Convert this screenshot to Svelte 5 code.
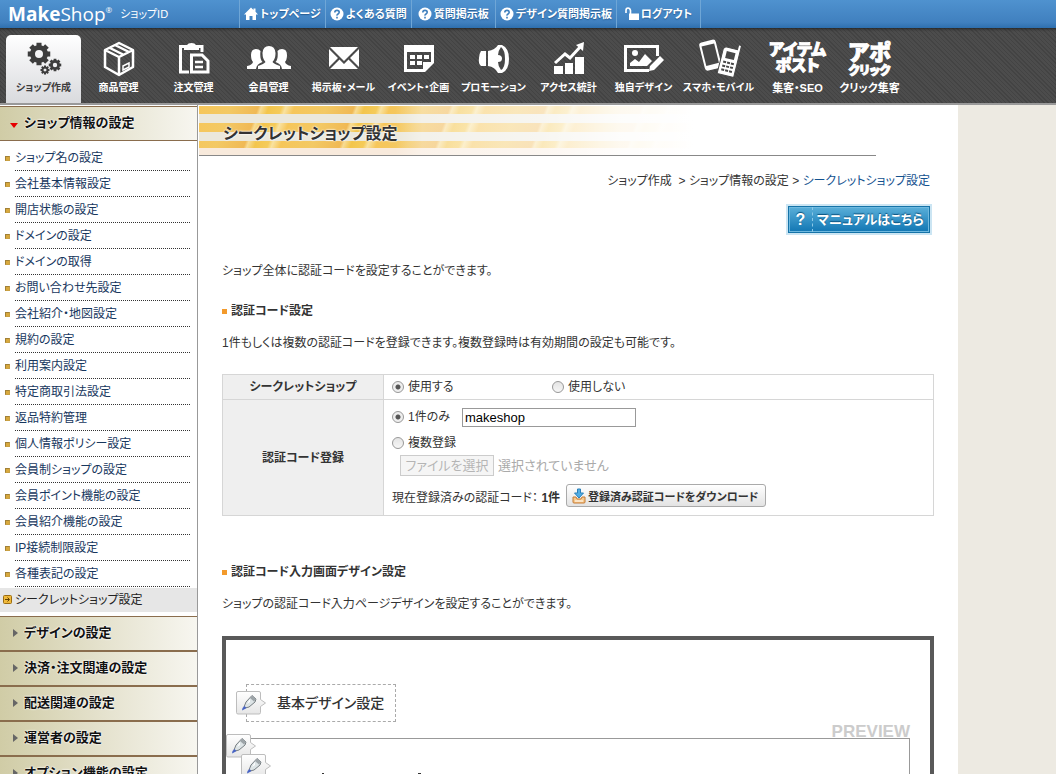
<script lang="ts">
	type IconName = 'gears' | 'box' | 'clipboard' | 'people' | 'mail' | 'calendar' | 'speaker' | 'chart' | 'design' | 'mobile';

	const topLinks = [
		{ label: 'トップページ', icon: 'home' },
		{ label: 'よくある質問', icon: 'help' },
		{ label: '質問掲示板', icon: 'help' },
		{ label: 'デザイン質問掲示板', icon: 'help' },
		{ label: 'ログアウト', icon: 'lock' }
	];

	const menus: { label: string; icon: IconName }[] = [
		{ label: 'ショップ作成', icon: 'gears' },
		{ label: '商品管理', icon: 'box' },
		{ label: '注文管理', icon: 'clipboard' },
		{ label: '会員管理', icon: 'people' },
		{ label: '掲示板・メール', icon: 'mail' },
		{ label: 'イベント・企画', icon: 'calendar' },
		{ label: 'プロモーション', icon: 'speaker' },
		{ label: 'アクセス統計', icon: 'chart' },
		{ label: '独自デザイン', icon: 'design' },
		{ label: 'スマホ・モバイル', icon: 'mobile' }
	];

	const sideItems = [
		'ショップ名の設定',
		'会社基本情報設定',
		'開店状態の設定',
		'ドメインの設定',
		'ドメインの取得',
		'お問い合わせ先設定',
		'会社紹介・地図設定',
		'規約の設定',
		'利用案内設定',
		'特定商取引法設定',
		'返品特約管理',
		'個人情報ポリシー設定',
		'会員制ショップの設定',
		'会員ポイント機能の設定',
		'会員紹介機能の設定',
		'IP接続制限設定',
		'各種表記の設定'
	];

	const sideGroups = ['デザインの設定', '決済・注文関連の設定', '配送関連の設定', '運営者の設定', 'オプション機能の設定'];

	const teeth = [0, 45, 90, 135, 180, 225, 270, 315];

	let activeMenu = $state(0);
	let enabled = $state('on');
	let codeType = $state('single');
	let code = $state('makeshop');
</script>

{#snippet gear(x: number, y: number, r: number, hole: number)}
	<g transform="translate({x} {y})">
		{#each teeth as t}
			<rect x={-r * 0.28} y={-r * 1.25} width={r * 0.56} height={r / 2} transform="rotate({t})" />
		{/each}
		<circle r={(r + hole) / 2} fill="none" stroke="currentColor" stroke-width={r - hole} />
	</g>
{/snippet}

{#snippet penTag()}
	<svg class="pen-tag" width="31" height="24" viewBox="0 0 31 24">
		<defs>
			<linearGradient id="tagBg" x2="0" y2="1">
				<stop offset="0" stop-color="#fff" />
				<stop offset="1" stop-color="#e6e6e6" />
			</linearGradient>
		</defs>
		<path d="M2 .5h21q1.500 0 1.500 1.500v6.500l5 3.500-5 3.500v6q0 1.500-1.500 1.500h-21q-1.500 0-1.500-1.500v-19.500q0-1.500 1.500-1.500z" fill="url(#tagBg)" stroke="#bdbdbd" />
		<path d="M16 4.500l4 3.500-1 3-6 5-4 1-1-1 2-5z" fill="#dde4e6" stroke="#777e82" />
		<path d="M16 4.500l4 3.500-2 2.500-4-3.500z" fill="#9da4a8" />
		<path d="M14 8l-3 5 3-2z" fill="#fff" />
		<path d="M8.500 15l2 2-2.500 1.500-2 1 .5-2.500z" fill="#4763c4" />
	</svg>
{/snippet}

<div class="page">
	<header>
		<div class="topbar">
			<a class="logo" href="#top"><b>Make</b>Shop<sup>®</sup></a>
			<span class="shop-id">ショップID</span>
			<nav class="toplinks">
				{#each topLinks as link}
					<a href="#{link.icon}">
						<svg width="14" height="14" viewBox="0 0 14 14" fill="currentColor">
							{#if link.icon === 'home'}
								<path d="M7 .5l2.500 2.400V1.500h2v3.300L14 7.500h-2V13H8.500V9h-3v4H2V7.500H0z" />
							{:else if link.icon === 'help'}
								<circle cx="7" cy="7" r="6.500" />
								<path d="M4.800 5.500Q4.800 3.400 7 3.400T9.200 5.300Q9.200 6.300 8 7T7 8.700M7 9.800v1.600" fill="none" stroke="#3f7fbd" stroke-width="1.600" />
							{:else}
								<path d="M5 6.500h9V13H4V6.500z" />
								<path d="M1 6V3.500Q1 1 3 1t2.500 2.500V7" fill="none" stroke="currentColor" stroke-width="1.600" />
							{/if}
						</svg>
						{link.label}
					</a>
				{/each}
			</nav>
		</div>

		<nav class="menubar">
			{#each menus as menu, i}
				<a href="#{menu.icon}" class="menu" class:active={activeMenu === i} onclick={() => (activeMenu = i)}>
					<svg width="44" height="40" viewBox="0 0 44 40" fill="currentColor">
						{#if menu.icon === 'gears'}
							{@render gear(17, 15, 9, 4)}
							{@render gear(33, 26, 5, 2.2)}
							{@render gear(23, 31, 3.6, 1.5)}
						{:else if menu.icon === 'box'}
							<path d="M22 4l14 7v17l-14 8-14-8V11zM8 11l14 7 14-7M22 18v18M12 8.500l14 7M18 6l14 7" fill="none" stroke="currentColor" stroke-width="2.500" stroke-linejoin="round" />
							<path d="M26 27l6-3v4l-6 3z" fill="none" stroke="currentColor" stroke-width="1.500" />
						{:else if menu.icon === 'clipboard'}
							<path d="M17 33H8.500V7.500H30V13" fill="none" stroke="currentColor" stroke-width="3" />
							<path d="M12 6h3q1-2 4.500-2T24 6h3v5H12z" />
							<path d="M19.500 16H30l6 6v11H19.500z" fill="none" stroke="currentColor" stroke-width="3" />
							<path d="M23 23h8M23 28h8" stroke="currentColor" stroke-width="2.500" />
						{:else if menu.icon === 'people'}
							<path d="M11 30v-3q6-2 7.500-4-3-3-3-9Q16 7 22 7t6.500 7q0 6-3 9 1.500 2 7.500 4v3z" />
							<path d="M0 30v-3q5-1 6-4-2-2-2-7 0-6 5-6 3 0 4.500 2-1 8 2 11-6 2-6.500 7zM44 30v-3q-5-1-6-4 2-2 2-7 0-6-5-6-3 0-4.500 2 1 8-2 11 6 2 6.500 7z" />
						{:else if menu.icon === 'mail'}
							<path d="M8 8h28L22 22zM7 10l9 9-9 9zM37 10v18l-9-9zM17.500 20.500L22 25l4.500-4.500L36 30H8z" />
						{:else if menu.icon === 'calendar'}
							<path d="M7 6h30v18l-9 9H7zM10 13v17h16v-7h8V13z" fill-rule="evenodd" />
							<path d="M13 16h5v4h-5zM20 16h5v4h-5zM27 16h5v4h-5zM13 22h5v4h-5zM20 22h5v4h-5z" />
						{:else if menu.icon === 'speaker'}
							<path d="M14 12v15H9q-3-3-2-8 0-4 2-7zM16 12q7-1 10-6h4q7 3 7 14t-7 14h-4q-3-6-10-7z" />
							<path d="M29 8q4 3 4 12t-4 11q-3-4-3-8 4 0 4-3.500T26 16q0-4 3-8z" fill="#484848" />
						{:else if menu.icon === 'chart'}
							<path d="M7 27h9v8H7zM18 24h8v11h-8zM28 18h9v17h-9z" />
							<path d="M8 24l10-9 5 4 11-12" fill="none" stroke="currentColor" stroke-width="3" />
							<path d="M29 6l8-3-1 9z" />
						{:else if menu.icon === 'design'}
							<path d="M27 31.500H3.500v-24h32V17" fill="none" stroke="currentColor" stroke-width="3" />
							<circle cx="13" cy="14" r="3" />
							<path d="M8 27v-3l5-4 4 3 6-8 7 7-5 5zM27 32l1-5 10-10 4 4-10 10z" />
						{:else}
							<g transform="rotate(-14 12 17)">
								<rect x="5" y="2" width="17" height="29" rx="3" />
								<rect x="7" y="6" width="13" height="20" fill="#484848" />
							</g>
							<g transform="rotate(14 32 24)">
								<path d="M25 9h12V4h3v33H23V11z" stroke="#484848" />
								<path d="M27 13h9v7h-9zM26 23h3v2h-3zM30 23h3v2h-3zM34 23h3v2h-3zM26 27h3v2h-3zM30 27h3v2h-3zM34 27h3v2h-3zM26 31h3v2h-3zM30 31h3v2h-3zM34 31h3v2h-3z" fill="#484848" />
							</g>
						{/if}
					</svg>
					<span>{menu.label}</span>
				</a>
			{/each}
			<a href="#itempost" class="menu wide">
				<strong class="wordmark">アイテム<br />ポスト</strong>
				<span>集客・SEO</span>
			</a>
			<a href="#click" class="menu narrow">
				<strong class="wordmark tall">アポ<small>クリック</small></strong>
				<span>クリック集客</span>
			</a>
		</nav>
	</header>

	<div class="body">
		<aside>
			<h2 class="group open"><a href="#shop">ショップ情報の設定</a></h2>
			<ul>
				{#each sideItems as item}
					<li><a href="#item">{item}</a></li>
				{/each}
				<li class="current">
					<svg width="9" height="9" viewBox="0 0 9 9">
						<rect x=".5" y=".5" width="8" height="8" rx="1" fill="#f0b93a" stroke="#9a6c13" />
						<path d="M2 4.500h4M4.500 2.500l2 2-2 2" fill="none" stroke="#634300" />
					</svg>
					<a href="#secret">シークレットショップ設定</a>
				</li>
			</ul>
			{#each sideGroups as group}
				<h2 class="group"><a href="#group">{group}</a></h2>
			{/each}
		</aside>

		<main>
			<h1>シークレットショップ設定</h1>
			<div class="content">
				<p class="crumbs">
					<a href="#create">ショップ作成</a> &nbsp;&gt; <a href="#shop">ショップ情報の設定</a> &gt; <a class="here" href="#secret">シークレットショップ設定</a>
				</p>
				<a class="manual" href="#manual"><span class="q">?</span><span>マニュアルはこちら</span></a>

				<p class="lead">ショップ全体に認証コードを設定することができます。</p>
				<h3>認証コード設定</h3>
				<p>1件もしくは複数の認証コードを登録できます。複数登録時は有効期間の設定も可能です。</p>

				<table>
					<tbody>
						<tr>
							<th scope="row">シークレットショップ</th>
							<td>
								<div class="line first">
									<label><input type="radio" value="on" bind:group={enabled} />使用する</label>
									<label><input type="radio" value="off" bind:group={enabled} />使用しない</label>
								</div>
							</td>
						</tr>
						<tr>
							<th scope="row">認証コード登録</th>
							<td class="codes">
								<div class="line">
									<label><input type="radio" value="single" bind:group={codeType} />1件のみ</label>
									<input class="code" type="text" aria-label="認証コード" bind:value={code} />
								</div>
								<div class="line">
									<label><input type="radio" value="multi" bind:group={codeType} />複数登録</label>
								</div>
								<div class="file">
									<button type="button" disabled={codeType === 'single'}>ファイルを選択</button>
									<span>選択されていません</span>
								</div>
								<div class="registered">
									<span>現在登録済みの認証コード： <b>1件</b></span>
									<button type="button" class="download">
										<svg width="14" height="16" viewBox="0 0 14 16">
											<path d="M1 9h3l1 2h4l1-2h3v5q0 1-1 1H2q-1 0-1-1z" fill="#f7c88a" stroke="#c47a35" />
											<path d="M3 13h8" stroke="#fff" />
											<path d="M5.500 1h3v4h3L7 10 2.500 5h3z" fill="#52aee4" stroke="#2a80b9" />
										</svg>
										登録済み認証コードをダウンロード
									</button>
								</div>
							</td>
						</tr>
					</tbody>
				</table>

				<h3>認証コード入力画面デザイン設定</h3>
				<p>ショップの認証コード入力ページデザインを設定することができます。</p>

				<section class="preview">
					<a class="basic" href="#design">{@render penTag()}基本デザイン設定</a>
					<div class="preview-label">PREVIEW</div>
					<div class="canvas">
						<div class="tag-a">{@render penTag()}</div>
						<div class="tag-b">{@render penTag()}</div>
						<svg class="marks" width="102" height="4" viewBox="0 0 102 4" fill="#333">
							<rect width="2" height="4" />
							<rect x="96" width="3" height="4" />
						</svg>
					</div>
				</section>
			</div>
		</main>
	</div>
</div>

<style>
	:global(body) {
		margin: 0;
		background: #edeae2;
	}

	.page {
		height: 100vh;
		overflow: hidden;
		font-family: 'Liberation Sans', 'Noto Sans CJK JP', sans-serif;
		font-size: 12px;
		line-height: 18px;
		color: #333;
		font-feature-settings: 'palt';
	}

	a {
		color: inherit;
		text-decoration: none;
	}

	p,
	h1,
	h2,
	h3,
	ul {
		margin: 0;
		padding: 0;
	}

	/* header */
	.topbar {
		display: flex;
		align-items: center;
		height: 28px;
		background: linear-gradient(#4f92cf, #4080bf 80%, #2e6fae);
		color: #fff;
	}

	.logo {
		width: 112px;
		padding-left: 8px;
		font-family: 'Open Sans', sans-serif;
		font-size: 19px;
		line-height: 26px;
		white-space: nowrap;
	}

	.logo sup {
		font-size: 8px;
		line-height: 8px;
		vertical-align: 8px;
	}

	.shop-id {
		width: 119px;
		font-size: 11px;
	}

	.toplinks {
		display: flex;
		align-self: stretch;
		border-right: 1px solid #6fa6d6;
	}

	.toplinks a {
		display: flex;
		align-items: center;
		justify-content: center;
		gap: 2px;
		box-sizing: border-box;
		min-width: 84px;
		padding: 0 4px;
		border-left: 1px solid #6fa6d6;
		font-size: 11px;
		font-weight: bold;
		white-space: nowrap;
		text-shadow: 0 1px 1px #245c94;
	}

	.menubar {
		display: flex;
		align-items: flex-end;
		height: 75px;
		padding-left: 6px;
		border-bottom: 2px solid #999;
		background: repeating-linear-gradient(45deg, #434343 0 1px, #4c4c4c 1px 3px);
		box-shadow: inset 0 3px 3px -2px #222;
	}

	.menu {
		display: flex;
		flex-direction: column;
		align-items: center;
		width: 75px;
		height: 68px;
		color: #fff;
		font-size: 10px;
		font-weight: bold;
		white-space: nowrap;
	}

	.menu > svg {
		margin-top: 4px;
	}

	.menu.active {
		border-radius: 5px 5px 0 0;
		background: linear-gradient(#fff, #d9dadd);
		color: #3d3d3d;
	}

	.menu.wide {
		width: 83px;
		font-size: 11px;
	}

	.menu.narrow {
		width: 61px;
		font-size: 11px;
	}

	.wordmark {
		height: 44px;
		box-sizing: border-box;
		padding-top: 7px;
		font-size: 16px;
		line-height: 16px;
		text-align: center;
		-webkit-text-stroke: 1px #fff;
	}

	.wordmark.tall {
		font-size: 22px;
		line-height: 22px;
	}

	.wordmark small {
		display: block;
		font-size: 12px;
		line-height: 14px;
	}

	/* sidebar */
	.body {
		display: flex;
		max-width: 958px;
		background: #fff;
	}

	aside {
		flex: none;
		width: 197px;
		padding-top: 1px;
		border-right: 1px solid #999;
	}

	.group {
		position: relative;
		padding: 0 0 2px 24px;
		border-bottom: 2px solid #8a6d4d;
		background: linear-gradient(90deg, #d0cca6, #e4e1cc 50%, #f7f6f0);
		font-size: 13px;
		line-height: 31px;
		color: #111;
		text-shadow: 0 0 2px #fff, 0 0 2px #fff;
	}

	.group::before {
		content: '';
		position: absolute;
		left: 13px;
		top: 12px;
		border: 4px solid transparent;
		border-left: 5px solid #666;
		border-right: 0;
	}

	.group.open {
		border-top: 1px solid #8a6d4d;
		border-bottom-width: 1px;
	}

	.group.open::before {
		left: 10px;
		top: 16px;
		border: 4px solid transparent;
		border-top: 5px solid #e60000;
		border-bottom: 0;
	}

	ul {
		padding: 4px 0;
		border-bottom: 1px solid #8a6d4d;
		list-style: none;
	}

	li {
		position: relative;
		padding-left: 15px;
		color: #17375e;
	}

	li a {
		display: block;
		width: 175px;
		padding-top: 2px;
		border-bottom: 1px dotted #333;
		line-height: 23px;
	}

	li:not(.current)::before {
		content: '';
		position: absolute;
		left: 5px;
		top: 11px;
		width: 5px;
		height: 5px;
		border: 1px solid;
		border-color: #a08038 #c9a042 #c9a042 #a08038;
		box-sizing: border-box;
		background: #d8a83c;
	}

	.current {
		margin-top: 1px;
		background: #e6e6e6;
		color: #222;
	}

	.current svg {
		position: absolute;
		left: 3px;
		top: 7px;
	}

	.current a {
		padding-top: 1px;
		border: 0;
	}

	/* main */
	main {
		flex: 1;
		min-width: 0;
	}

	h1 {
		margin: 1px 82px 0 1px;
		padding: 7px 0 0 24px;
		border-bottom: 1px solid #888;
		background:
			linear-gradient(90deg, transparent 29%, rgba(255, 255, 255, 0.4) 33%, rgba(255, 255, 255, 0.6) 50%, rgba(255, 255, 255, 0.9) 62%, #fff 73%),
			linear-gradient(#0000 8px, #ebe8dc 8px 17px, #0000 17px 26px, #ebe8dc 26px 35px, #0000 35px 42px, #f8eadc 42px),
			repeating-linear-gradient(110deg, #f6c65a 0, #f3c964 30px, #f0b955 56px, #f8dc94 59px, #f3c54c 66px, #f5cb5a 78px, #f9e2a0 82px, #f6c65a 90px);
		font-size: 16px;
		line-height: 42px;
		color: #333;
		text-shadow: 0 0 2px #fff, 0 0 2px #fff;
	}

	.content {
		padding: 16px 24px 0;
	}

	.crumbs {
		margin-right: 4px;
		text-align: right;
	}

	.here {
		color: #14528f;
	}

	.manual {
		display: flex;
		width: 140px;
		margin: 16px 4px 0 auto;
		border: 1px solid #1573a8;
		outline: 2px solid #cbe5f3;
		background: linear-gradient(#5aafd9, #1176b3);
		box-shadow: inset 0 0 0 1px #6fb9df;
		color: #fff;
		font-size: 13px;
		font-weight: bold;
		line-height: 25px;
		text-shadow: 0 -1px 1px #0b527e;
		white-space: nowrap;
	}

	.manual .q {
		width: 23px;
		margin-right: 4px;
		border-right: 1px dashed #8cc8e6;
		font-size: 16px;
		text-align: center;
	}

	.lead {
		margin-top: 29px;
	}

	h3 {
		display: flex;
		align-items: center;
		gap: 4px;
		margin: 22px 0 14px;
		font-size: 12px;
	}

	h3::before {
		content: '';
		width: 5px;
		height: 5px;
		background: #f39a2b;
	}

	table {
		width: 100%;
		margin: 22px 0 47px;
		border-collapse: collapse;
	}

	th,
	td {
		padding: 0 8px;
		border: 1px solid #d6d6d6;
	}

	th {
		width: 144px;
		background: #efefef;
	}

	.line {
		display: flex;
		align-items: center;
		height: 26px;
	}

	.line.first {
		height: 24px;
	}

	.line.first label {
		width: 160px;
	}

	label {
		display: flex;
		align-items: center;
		gap: 4px;
	}

	input[type='radio'] {
		appearance: none;
		width: 12px;
		height: 12px;
		margin: 0;
		border: 1px solid #999;
		border-radius: 50%;
		background: linear-gradient(#e4e4e4, #f6f6f6);
	}

	input[type='radio']:checked {
		background: radial-gradient(circle, #555 0 2px, #eee 3px);
	}

	.codes {
		padding: 4px 8px 8px;
	}

	.code {
		width: 174px;
		height: 19px;
		box-sizing: border-box;
		margin-left: 12px;
		padding: 0 2px;
		border: 1px solid #999;
		font: 13px 'Liberation Sans', sans-serif;
		color: #000;
	}

	button {
		font-family: inherit;
		font-feature-settings: inherit;
		white-space: nowrap;
	}

	.file {
		display: flex;
		align-items: center;
		gap: 4px;
		margin: -1px 0 8px 8px;
		font-size: 13px;
		color: #aaa;
	}

	.file button {
		width: 94px;
		height: 21px;
		padding: 0;
		border: 1px solid #ccc;
		background: #f5f5f5;
		font-size: 13px;
		line-height: 18px;
	}

	.file button:disabled {
		color: #b5b5b5;
	}

	.registered {
		display: flex;
		align-items: flex-end;
		gap: 6px;
	}

	.download {
		display: flex;
		align-items: center;
		gap: 2px;
		height: 23px;
		padding: 0 7px 0 5px;
		border: 1px solid #aaa;
		border-radius: 3px;
		background: linear-gradient(#fff, #e3e3e3);
		color: #333;
		font-size: 11px;
		font-weight: bold;
	}

	/* preview */
	.preview {
		margin-top: 23px;
		border: 4px solid #595959;
		border-bottom: 0;
		padding: 44px 20px 0 0;
	}

	.basic {
		position: relative;
		display: block;
		width: 148px;
		margin-left: 20px;
		border: 1px dashed #aaa;
		font-size: 14px;
		font-weight: 500;
		line-height: 36px;
		text-indent: 30px;
	}

	.basic :global(.pen-tag) {
		position: absolute;
		left: -11px;
		top: 6px;
	}

	.preview-label {
		height: 16px;
		color: #ccc;
		font-size: 17px;
		font-weight: bold;
		line-height: 20px;
		text-align: right;
	}

	.canvas {
		position: relative;
		height: 300px;
		border: 1px solid #999;
		border-left: 0;
	}

	.tag-a,
	.tag-b {
		position: absolute;
		left: 0;
		top: -5px;
	}

	.tag-b {
		left: 15px;
		top: 15px;
	}

	.marks {
		display: block;
		margin: 34px 0 0 96px;
	}
</style>
